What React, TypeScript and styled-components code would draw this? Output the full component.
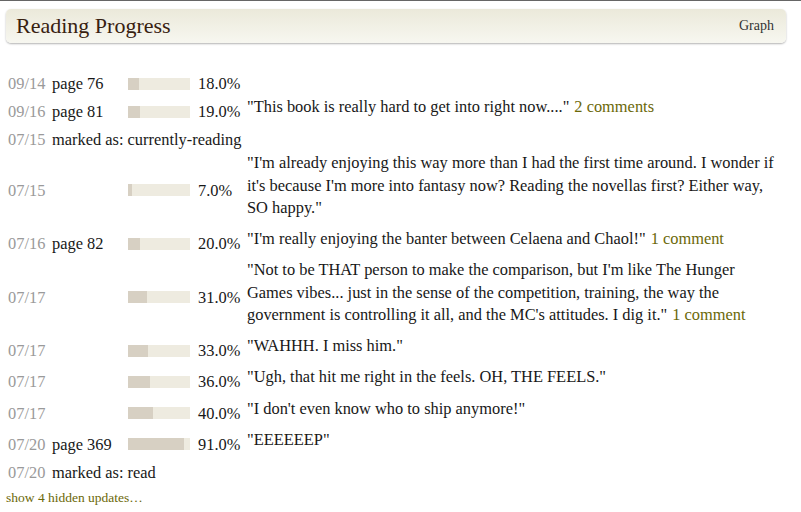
import styled, { createGlobalStyle } from 'styled-components'

type Update = {
	date: string
	page?: string
	pct?: number
	status?: string
	comment?: string
	link?: string
}

const updates: Update[] = [
	{ date: '09/14', page: 'page 76', pct: 18 },
	{
		date: '09/16',
		page: 'page 81',
		pct: 19,
		comment: '"This book is really hard to get into right now...."',
		link: '2 comments',
	},
	{ date: '07/15', status: 'currently-reading' },
	{
		date: '07/15',
		pct: 7,
		comment:
			'"I\'m already enjoying this way more than I had the first time around. I wonder if it\'s because I\'m more into fantasy now? Reading the novellas first? Either way, SO happy."',
	},
	{
		date: '07/16',
		page: 'page 82',
		pct: 20,
		comment: '"I\'m really enjoying the banter between Celaena and Chaol!"',
		link: '1 comment',
	},
	{
		date: '07/17',
		pct: 31,
		comment:
			'"Not to be THAT person to make the comparison, but I\'m like The Hunger Games vibes... just in the sense of the competition, training, the way the government is controlling it all, and the MC\'s attitudes. I dig it."',
		link: '1 comment',
	},
	{ date: '07/17', pct: 33, comment: '"WAHHH. I miss him."' },
	{ date: '07/17', pct: 36, comment: '"Ugh, that hit me right in the feels. OH, THE FEELS."' },
	{ date: '07/17', pct: 40, comment: '"I don\'t even know who to ship anymore!"' },
	{ date: '07/20', page: 'page 369', pct: 91, comment: '"EEEEEEP"' },
	{ date: '07/20', status: 'read' },
]

export default function App() {
	return (
		<>
			<GlobalStyle />
			<Page>
				<Header>
					<Title>Reading Progress</Title>
					<HeaderLink>Graph</HeaderLink>
				</Header>
				<Timeline>
					{updates.map((u, i) => (
						<Row key={i}>
							<DateCell>{u.date}</DateCell>
							{u.status ? (
								<StatusCell>marked as: {u.status}</StatusCell>
							) : (
								<>
									<PageCell>{u.page}</PageCell>
									<Bar>
										<BarFill style={{ width: `${u.pct}%` }} />
									</Bar>
									<Percent>{(u.pct ?? 0).toFixed(1)}%</Percent>
									{u.comment && (
										<Comment>
											{u.comment}
											{u.link && <CommentLink>{u.link}</CommentLink>}
										</Comment>
									)}
								</>
							)}
						</Row>
					))}
				</Timeline>
				<ShowHidden>show 4 hidden updates…</ShowHidden>
			</Page>
		</>
	)
}

const GlobalStyle = createGlobalStyle`
	body {
		margin: 0;
		background: #fff;
		font-family: "Liberation Serif", "DejaVu Serif", serif;
		color: #222;
	}
`

const Page = styled.div`
	width: 801px;
	border-top: 1px solid #666;
	padding: 8px 15px 0 6px;
	box-sizing: border-box;
`

const Header = styled.div`
	height: 34px;
	display: flex;
	align-items: center;
	justify-content: space-between;
	padding: 0 12px 0 10px;
	border-radius: 5px;
	background: linear-gradient(#ebe9da, #f7f7f0);
	box-shadow: 0 1px 2px rgba(0, 0, 0, 0.3);
`

const Title = styled.h2`
	margin: 0;
	font-size: 22px;
	font-weight: normal;
	color: #382110;
`

const HeaderLink = styled.span`
	font-size: 14px;
	color: #333;
`

const Timeline = styled.div`
	margin-top: 28px;
	padding-left: 2px;
`

const Row = styled.div`
	display: grid;
	grid-template-columns: 44px 76px 62px 57px 1fr;
	align-items: center;
	font-size: 16.4px;
	line-height: 25px;
`

const DateCell = styled.span`
	color: #9a9a9a;
`

const PageCell = styled.span`
	color: #181818;
`

const StatusCell = styled.span`
	grid-column: 2 / -1;
	color: #181818;
`

const Bar = styled.div`
	height: 12px;
	background: #eeebe0;
`

const BarFill = styled.div`
	height: 100%;
	background: #d7d0c3;
`

const Percent = styled.span`
	padding-left: 8px;
	color: #181818;
`

const Comment = styled.p`
	margin: 0;
	padding: 0 0 9px;
	line-height: 22.25px;
	color: #181818;
	width: 530px;
`

const CommentLink = styled.span`
	margin-left: 5px;
	color: #6b6808;
`

const ShowHidden = styled.div`
	font-size: 13.5px;
	line-height: 25px;
	color: #6b6808;
`
